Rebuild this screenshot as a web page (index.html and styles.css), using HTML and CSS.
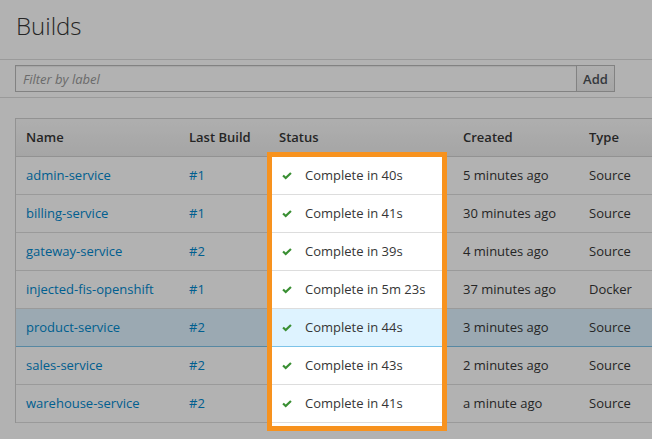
FILE: index.html
```html
<!DOCTYPE html>
<html>
<head>
<meta charset="utf-8">
<link rel="stylesheet" href="styles.css">
</head>
<body>
<div class="page">
  <div class="page-header">
    <h1 class="title">Builds</h1>
  </div>
  <div class="toolbar">
    <div class="filter">
      <input class="filter-input" type="text" placeholder="Filter by label">
      <button class="filter-btn">Add</button>
    </div>
  </div>
  <div class="table-wrap">
    <table class="builds">
      <colgroup>
        <col class="c-name"><col class="c-last"><col class="c-status"><col class="c-created"><col class="c-type">
      </colgroup>
      <thead>
        <tr><th>Name</th><th>Last Build</th><th>Status</th><th>Created</th><th>Type</th></tr>
      </thead>
      <tbody>
        <tr><td><a class="link">admin-service</a></td><td><a class="link">#1</a></td><td class="hidden-status"></td><td>5 minutes ago</td><td>Source</td></tr>
        <tr><td><a class="link">billing-service</a></td><td><a class="link">#1</a></td><td class="hidden-status"></td><td>30 minutes ago</td><td>Source</td></tr>
        <tr><td><a class="link">gateway-service</a></td><td><a class="link">#2</a></td><td class="hidden-status"></td><td>4 minutes ago</td><td>Source</td></tr>
        <tr><td><a class="link">injected-fis-openshift</a></td><td><a class="link">#1</a></td><td class="hidden-status"></td><td>37 minutes ago</td><td>Docker</td></tr>
        <tr class="selected"><td><a class="link">product-service</a></td><td><a class="link">#2</a></td><td class="hidden-status"></td><td>3 minutes ago</td><td>Source</td></tr>
        <tr><td><a class="link">sales-service</a></td><td><a class="link">#2</a></td><td class="hidden-status"></td><td>2 minutes ago</td><td>Source</td></tr>
        <tr><td><a class="link">warehouse-service</a></td><td><a class="link">#2</a></td><td class="hidden-status"></td><td>a minute ago</td><td>Source</td></tr>
      </tbody>
    </table>
  </div>
</div>

<div class="dim"></div>

<div class="spotlight">
  <div class="spot-row"><svg class="check" viewBox="0 0 10 8"><path d="M0.3 4.2 L1.8 2.7 L3.7 4.6 L8.2 0.2 L9.7 1.7 L3.7 7.6 Z"/></svg><span>Complete in 40s</span></div>
  <div class="spot-row"><svg class="check" viewBox="0 0 10 8"><path d="M0.3 4.2 L1.8 2.7 L3.7 4.6 L8.2 0.2 L9.7 1.7 L3.7 7.6 Z"/></svg><span>Complete in 41s</span></div>
  <div class="spot-row"><svg class="check" viewBox="0 0 10 8"><path d="M0.3 4.2 L1.8 2.7 L3.7 4.6 L8.2 0.2 L9.7 1.7 L3.7 7.6 Z"/></svg><span>Complete in 39s</span></div>
  <div class="spot-row"><svg class="check" viewBox="0 0 10 8"><path d="M0.3 4.2 L1.8 2.7 L3.7 4.6 L8.2 0.2 L9.7 1.7 L3.7 7.6 Z"/></svg><span>Complete in 5m 23s</span></div>
  <div class="spot-row selected"><svg class="check" viewBox="0 0 10 8"><path d="M0.3 4.2 L1.8 2.7 L3.7 4.6 L8.2 0.2 L9.7 1.7 L3.7 7.6 Z"/></svg><span>Complete in 44s</span></div>
  <div class="spot-row"><svg class="check" viewBox="0 0 10 8"><path d="M0.3 4.2 L1.8 2.7 L3.7 4.6 L8.2 0.2 L9.7 1.7 L3.7 7.6 Z"/></svg><span>Complete in 43s</span></div>
  <div class="spot-row"><svg class="check" viewBox="0 0 10 8"><path d="M0.3 4.2 L1.8 2.7 L3.7 4.6 L8.2 0.2 L9.7 1.7 L3.7 7.6 Z"/></svg><span>Complete in 41s</span></div>
</div>
</body>
</html>
```

FILE: styles.css
```css
html, body {
  margin: 0;
  padding: 0;
  background: #ffffff;
  overflow: hidden;
}
body {
  font-family: "Open Sans", "Noto Sans", sans-serif;
  font-size: 13px;
  color: #363636;
  width: 652px;
  height: 439px;
}
.page {
  width: 652px;
  overflow: hidden;
}
.page-header {
  height: 59px;
  border-bottom: 1px solid #dddddd;
  box-sizing: content-box;
  padding: 0 15px;
}
.title {
  margin: 0;
  padding-top: 10px;
  font-size: 24px;
  font-weight: 300;
  line-height: 32px;
  color: #363636;
  padding-left: 1px;
}
.toolbar {
  padding: 5px 15px;
  border-bottom: 1px solid #dddddd;
}
.filter {
  display: flex;
  height: 27px;
}
.filter-input {
  width: 562px;
  height: 27px;
  box-sizing: border-box;
  border: 1px solid #bababa;
  padding: 0 7px;
  font-family: "Open Sans", sans-serif;
  font-size: 13px;
  margin: 0;
  outline: none;
  box-shadow: inset 0 1px 1px rgba(0,0,0,0.075);
}
.filter-input::placeholder {
  color: #999999;
  font-style: italic;
}
.filter-btn {
  width: 38px;
  height: 27px;
  box-sizing: border-box;
  margin: 0;
  border: 1px solid #bbbbbb;
  border-left: none;
  background: linear-gradient(to bottom, #fafafa 0%, #ededed 100%);
  font-family: "Open Sans", sans-serif;
  font-size: 13px;
  font-weight: 600;
  color: #4d5258;
  padding: 0;
}
.table-wrap {
  margin-top: 20px;
  margin-left: 15px;
  width: 720px;
}
.builds {
  width: 720px;
  table-layout: fixed;
  border-collapse: separate;
  border-spacing: 0;
  border-top: 1px solid #d1d1d1;
  border-left: 1px solid #d1d1d1;
}
.c-name { width: 163px; }
.c-last { width: 90px; }
.c-status { width: 184px; }
.c-created { width: 126px; }
.c-type { width: 157px; }
.builds th {
  text-align: left;
  font-weight: 600;
  line-height: 37px;
  padding: 0 10px;
  background: linear-gradient(to bottom, #fafafa 0%, #ededed 100%);
  border-bottom: 1px solid #d1d1d1;
  white-space: nowrap;
}
.builds td {
  line-height: 37px;
  height: 37px;
  padding: 0 10px;
  border-bottom: 1px solid #dddddd;
  white-space: nowrap;
  background: #ffffff;
}
.builds tr.selected td {
  background: #def3ff;
  border-bottom-color: #7dc3e8;
}
.link {
  color: #0088ce;
  text-decoration: none;
}
.dim {
  position: fixed;
  left: 0;
  top: 0;
  right: 0;
  bottom: 0;
  background: rgba(0, 0, 0, 0.3);
  z-index: 10;
}
.spotlight {
  position: absolute;
  left: 267px;
  top: 152px;
  width: 170px;
  border: 5px solid #f7921e;
  background: #ffffff;
  padding-bottom: 3px;
  z-index: 20;
}
.spot-row {
  height: 37px;
  line-height: 37px;
  border-bottom: 1px solid #dddddd;
  padding-left: 10px;
  white-space: nowrap;
  color: #363636;
}
.spot-row.selected {
  background: #def3ff;
  border-bottom-color: #7dc3e8;
}
.check {
  display: inline-block;
  vertical-align: middle;
  width: 10px;
  height: 8px;
  fill: #3a8f33;
  margin-right: 13px;
  position: relative;
  top: -1px;
}
```
